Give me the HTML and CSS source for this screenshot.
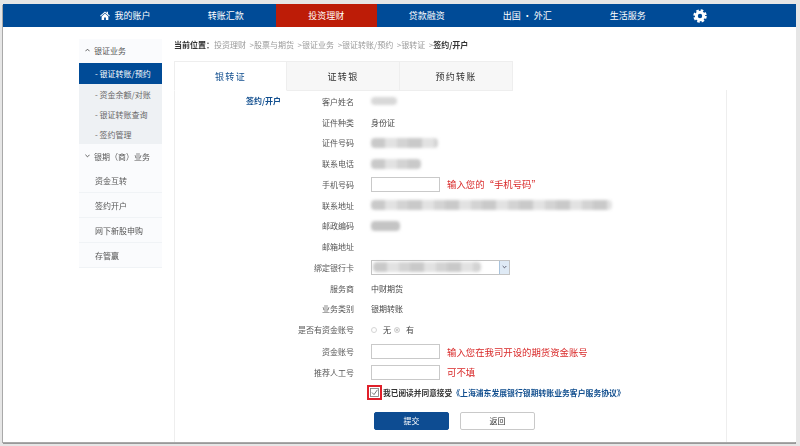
FILE: index.html
```html
<!DOCTYPE html>
<html lang="zh-CN">
<head>
<meta charset="utf-8">
<title>投资理财</title>
<link rel="stylesheet" href="styles.css">
</head>
<body>
<div class="frame">
  <nav class="nav">
    <a class="nav-item"><svg class="home" viewBox="0 0 12 11"><path d="M6 0.6 0 5.9l.7.8L6 2.1l5.3 4.6.7-.8L9.6 3.8V1H8v1.4z"/><path d="M6 3.1 1.9 6.7V11h3V7.8h2.2V11h3V6.7z"/></svg>我的账户</a>
    <a class="nav-item">转账汇款</a>
    <a class="nav-item active">投资理财</a>
    <a class="nav-item">贷款融资</a>
    <a class="nav-item">出国 · 外汇</a>
    <a class="nav-item">生活服务</a>
    <span class="gear"><svg viewBox="0 0 16 16"><circle cx="8" cy="8" r="6.4" class="teeth"/><circle cx="8" cy="8" r="4.2" class="ring"/></svg></span>
  </nav>
  <div class="content">
    <aside class="side">
      <div class="side-head"><svg class="chev" viewBox="0 0 6 4"><path d="M.5 3.5 3 1l2.5 2.5"/></svg>银证业务</div>
      <div class="side-sub">
        <div class="sub-item current">- 银证转账/预约</div>
        <div class="sub-item">- 资金余额/对账</div>
        <div class="sub-item">- 银证转账查询</div>
        <div class="sub-item">- 签约管理</div>
      </div>
      <div class="side-head"><svg class="chev" viewBox="0 0 6 4"><path d="M.5.5 3 3 5.5.5"/></svg>银期（商）业务</div>
      <div class="side-link">资金互转</div>
      <div class="side-link">签约开户</div>
      <div class="side-link">网下新股申购</div>
      <div class="side-link">存管赢</div>
    </aside>
    <main class="main">
      <div class="crumbs"><b>当前位置：</b><span>投资理财 &nbsp;&gt;股票与期货 &nbsp;&gt;银证业务 &nbsp;&gt;银证转账/预约 &nbsp;&gt;银转证 &nbsp;&gt;</span><b>签约/开户</b></div>
      <div class="tabs">
        <div class="tab on">银转证</div>
        <div class="tab">证转银</div>
        <div class="tab">预约转账</div>
      </div>
      <section class="panel">
        <h2 class="panel-title">签约/开户</h2>
        <div class="form">
          <div class="row"><label>客户姓名</label><i class="smear w26"></i></div>
          <div class="row"><label>证件种类</label><span>身份证</span></div>
          <div class="row"><label>证件号码</label><i class="smear w67"></i></div>
          <div class="row"><label>联系电话</label><i class="smear w50"></i></div>
          <div class="row"><label>手机号码</label><input class="field" type="text"><em class="hint">输入您的“手机号码”</em></div>
          <div class="row"><label>联系地址</label><i class="smear w241"></i></div>
          <div class="row"><label>邮政编码</label><i class="smear w29"></i></div>
          <div class="row"><label>邮箱地址</label></div>
          <div class="row"><label>绑定银行卡</label><div class="select"><i class="smear w108"></i><span class="arrow"><svg viewBox="0 0 6 4"><path d="M.8.8 3 3 5.2.8"/></svg></span></div></div>
          <div class="row"><label>服务商</label><span>中财期货</span></div>
          <div class="row"><label>业务类别</label><span>银期转账</span></div>
          <div class="row"><label>是否有资金账号</label><span class="radios"><i class="radio"></i>无<i class="radio sel"></i>有</span></div>
          <div class="row tall"><label>资金账号</label><input class="field" type="text"><em class="hint">输入您在我司开设的期货资金账号</em></div>
          <div class="row"><label>推荐人工号</label><input class="field" type="text"><em class="hint">可不填</em></div>
          <div class="row agree"><span class="check"><svg viewBox="0 0 9 9"><rect x=".5" y=".5" width="8" height="8"/><path d="M2 4.5 4 6.6 7.4 1.8"/></svg></span><b>我已阅读并同意接受</b><a>《上海浦东发展银行银期转账业务客户服务协议》</a></div>
          <div class="actions"><button class="btn primary" type="button">提交</button><button class="btn" type="button">返回</button></div>
        </div>
      </section>
    </main>
  </div>
</div>
</body>
</html>
```
FILE: styles.css
```css
* { box-sizing: border-box; }
html, body { margin: 0; height: 100%; overflow: hidden; }
body {
  background: #e6e6e6;
  padding: 4px 4px 2px 3px;
  font-family: "Noto Sans CJK SC", "Liberation Sans", sans-serif;
  font-size: 8px;
  color: #444;
}
.frame {
  height: 438px;
  background: #fff;
  box-shadow: -1px 1px 0 #a9a9a9, 0 2px 0 #999;
  filter: blur(0.4px);
  overflow: hidden;
}
.nav {
  height: 23px;
  background: #004b97;
  padding-left: 72px;
  display: flex;
  align-items: stretch;
  color: #fff;
}
.nav-item {
  width: 100.5px;
  display: flex;
  align-items: center;
  justify-content: center;
  font-size: 9px;
}
.nav-item.active { background: #bd1c07; }
.home { width: 10px; height: 9px; fill: #fff; margin-right: 4.5px; }
.gear { margin-left: 15px; width: 14px; display: flex; align-items: center; }
.gear svg { width: 14px; height: 14px; fill: none; stroke: #fff; }
.teeth { stroke-width: 2.6; stroke-dasharray: 2.9 2.13; }
.ring { stroke-width: 3.4; }
.content { display: flex; padding: 11px 0 0 76px; }
.side { width: 83px; margin-top: 1px; }
.side-head {
  height: 24px;
  display: flex;
  align-items: center;
  padding-left: 6px;
  background: #fafbfd;
  color: #555;
}
.side-head:first-child { padding-bottom: 2px; }
.chev { width: 5px; height: 4px; margin-right: 4px; fill: none; stroke: #444; stroke-width: 1; }
.side-sub { background: #eef1f4; color: #666; }
.sub-item { height: 20px; line-height: 21px; padding-left: 16px; }
.sub-item.current { height: 21px; line-height: 21px; background: #004b97; color: #fff; }
.side-link {
  height: 25px;
  line-height: 26px;
  padding-left: 16px;
  background: #fafbfd;
  border-bottom: 1px solid #f0f3f6;
  color: #555;
}
.main { width: 553px; margin-left: 12px; }
.crumbs { height: 23px; line-height: 13px; color: #999; white-space: nowrap; }
.crumbs b { color: #333; font-weight: 700; }
.tabs { display: flex; height: 30px; }
.tab {
  width: 113px;
  display: flex;
  align-items: center;
  justify-content: center;
  padding-top: 1px;
  font-size: 9px;
  letter-spacing: 1.3px;
  background: #f7f7f7;
  border: 1px solid #eee;
  border-left: 0;
  color: #333;
}
.tab.on {
  background: #fff;
  color: #124f8f;
  border-left: 1px solid #eee;
  border-bottom-color: #fff;
}
.panel {
  display: flex;
  border: 1px solid #eee;
  border-top: 0;
  margin-top: -1px;
  height: 360px;
}
.panel-title {
  width: 106px;
  margin: 0;
  padding-top: 5px;
  text-align: right;
  font-size: 8px;
  line-height: 12px;
  font-weight: 700;
  color: #124f8f;
}
.form { flex: 1; padding-top: 1px; color: #444; }
.row { height: 20.75px; display: flex; align-items: center; }
.row label { width: 73px; text-align: right; margin-right: 17px; flex: none; color: #555; }
.row.tall { height: 22px; padding-top: 1px; }
.smear {
  display: block;
  height: 10px;
  border-radius: 4px;
  filter: blur(1.5px);
  background: repeating-linear-gradient(90deg, #c9c9c9 0 14px, #e2e2e2 14px 26px, #d3d3d3 26px 37px);
}
.w26 { width: 26px; height: 8px; background: #d8d8d8; }
.w29 { width: 29px; background: #c4c4c4; }
.w50 { width: 50px; }
.w67 { width: 67px; }
.w108 { width: 108px; }
.w241 { width: 241px; }
.field {
  width: 69px;
  height: 15px;
  padding: 0;
  border: 1px solid #c9c9c9;
  background: #fff;
  outline: 0;
  flex: none;
}
.hint { font-style: normal; color: #d92a2a; font-size: 9.4px; margin-left: 7px; white-space: nowrap; }
.select {
  width: 139px;
  height: 15px;
  border: 1px solid #c4c4c4;
  display: flex;
  align-items: center;
  justify-content: space-between;
  padding-left: 1px;
  background: #fff;
}
.arrow {
  width: 10px;
  height: 13px;
  background: #dfeaf5;
  border-left: 1px solid #a9c3dc;
  display: flex;
  align-items: center;
  justify-content: center;
}
.arrow svg { width: 5px; height: 4px; fill: none; stroke: #445; stroke-width: 1; }
.radios { display: flex; align-items: center; }
.radio {
  width: 6px;
  height: 6px;
  border: 1px solid #d4d4d4;
  border-radius: 50%;
  margin-right: 6px;
  background: #fff;
}
.radio.sel { background: #bbb; box-shadow: inset 0 0 0 1px #fff; margin-left: 3px; }
.agree { padding-left: 86px; height: 20px; white-space: nowrap; font-size: 7.7px; }
.check {
  width: 15px;
  height: 15px;
  border: 2px solid #e0202a;
  display: flex;
  align-items: center;
  justify-content: center;
  margin-right: 1px;
  flex: none;
}
.check svg { width: 9px; height: 9px; fill: #fff; stroke: #777; stroke-width: .8; }
.check path { fill: none; stroke: #555; }
.agree b { color: #333; font-weight: 700; }
.agree a { color: #124f8f; font-weight: 700; font-size: 7.85px; }
.actions { display: flex; gap: 11px; padding: 9px 0 0 93px; }
.btn {
  width: 75px;
  height: 18px;
  padding: 0;
  font: inherit;
  font-size: 8px;
  border: 1px solid #c9c9c9;
  border-radius: 2px;
  background: #fff;
  color: #333;
}
.btn.primary { background: #0d4c92; border-color: #0d4c92; color: #fff; }
```
